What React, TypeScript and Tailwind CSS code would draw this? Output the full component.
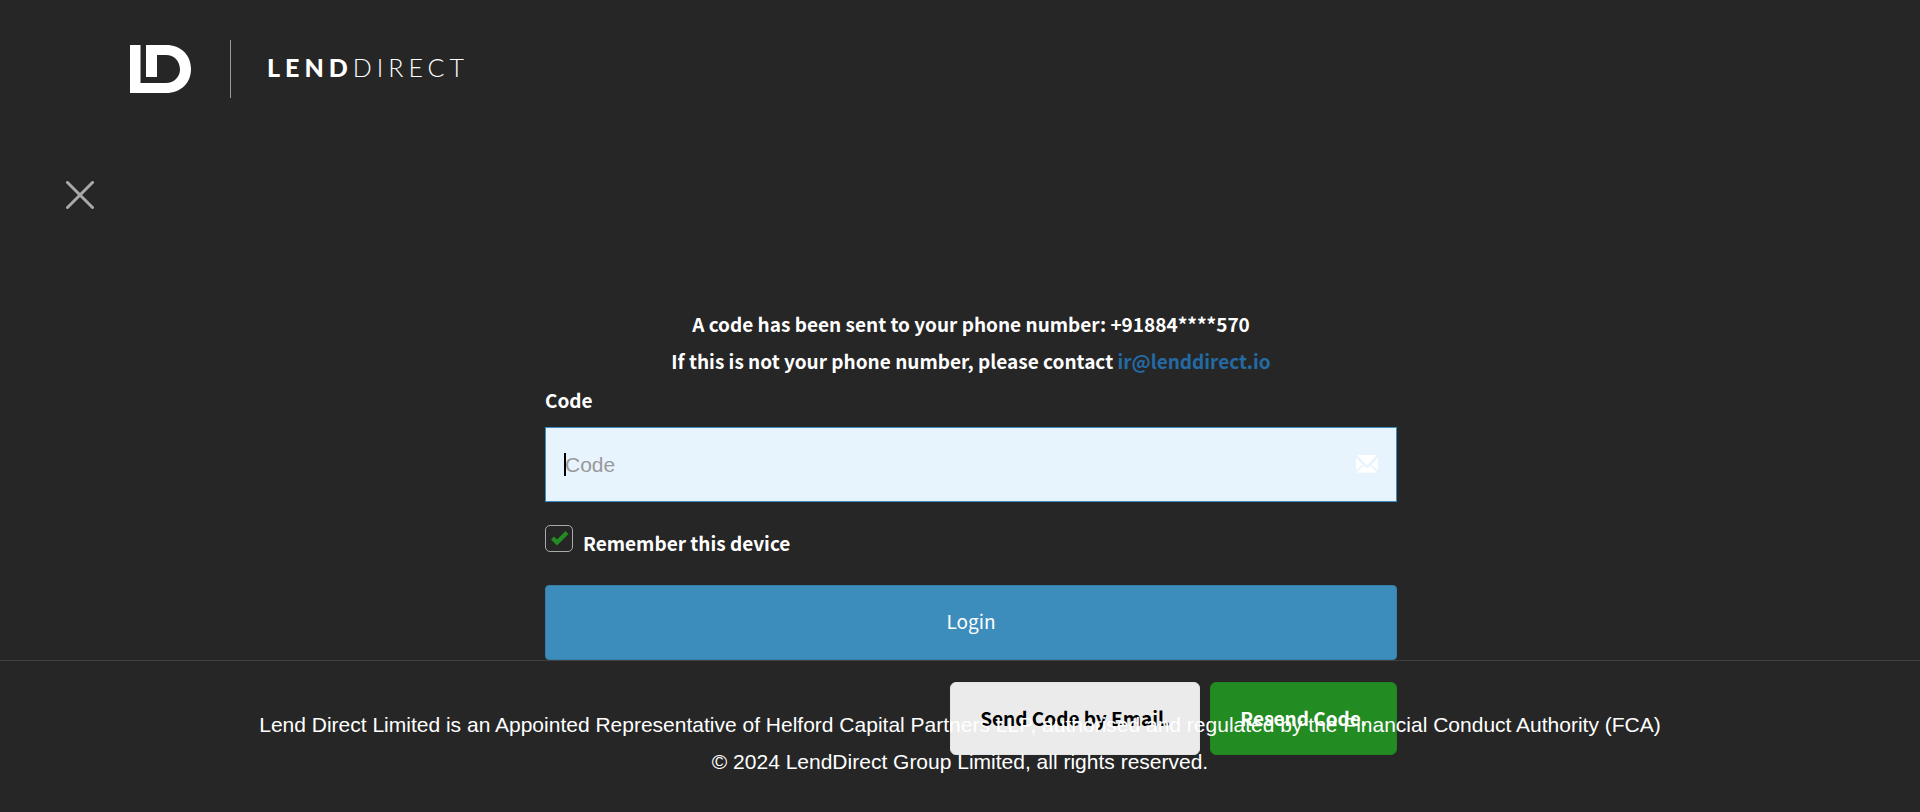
import { useState } from "react";

function LogoMark() {
  return (
    <svg className="h-12 w-[61px] fill-white" viewBox="0 0 61 48" aria-hidden="true">
      <path d="M0 0H10.5V38H36C44 38 50 32 50 24.500C50 16 44 10 36 10H27V32H16V0H36C51 0 61 10 61 24C61 38 51 48 36 48H0Z" />
    </svg>
  );
}

function Header() {
  return (
    <header className="flex items-center pt-10 pl-[130px]">
      <a href="#" aria-label="LendDirect" className="flex items-center text-white">
        <LogoMark />
        <span className="ml-[39px] h-[58px] w-px bg-[#999999]" />
        <span className="ml-9 pb-1 font-['Lato',sans-serif] text-[25px] leading-8 tracking-[0.2em]">
          <span className="font-black">LEND</span>
          <span className="font-light">DIRECT</span>
        </span>
      </a>
    </header>
  );
}

function LoginForm() {
  const [code, setCode] = useState("");
  const [remember, setRemember] = useState(true);

  return (
    <form
      className="mt-24 w-full max-w-[852px] font-['Noto_Sans_CJK_SC',sans-serif] text-[19px] text-white"
      onSubmit={(e) => e.preventDefault()}
    >
      <div className="text-center leading-[37px] font-bold">
        <p>A code has been sent to your phone number: +91884****570</p>
        <p>
          If this is not your phone number, please contact{" "}
          <a href="mailto:ir@lenddirect.io" className="text-[#246aa5]">
            ir@lenddirect.io
          </a>
        </p>
      </div>

      <label htmlFor="code" className="mb-1.5 block leading-[42px] font-bold">
        Code
      </label>
      <div className="relative">
        <input
          id="code"
          type="text"
          placeholder="Code"
          value={code}
          onChange={(e) => setCode(e.target.value)}
          className="block h-[75px] w-full border border-[#3c8dbc] bg-[#e8f4fd] pr-14 pl-[19px] font-['Liberation_Sans',sans-serif] text-[21px] text-black outline-none placeholder:text-[#999999]"
        />
        {code === "" && <span className="absolute top-[26px] left-[19px] h-[23px] w-0.5 bg-black" />}
        <svg className="absolute top-7 right-[19px] h-[18px] w-[22px] fill-white" viewBox="0 0 23 19" aria-hidden="true">
          <path d="M1 0H22L12.500 10Q11.500 11 10.500 10ZM0 3L7 10L0 16ZM23 3V16L16 10ZM8 11L10 13Q11.500 14.500 13 13L15 11L22.500 18.500H.5Z" />
        </svg>
      </div>

      <div className="mt-[23px] flex items-start gap-2.5">
        <span className="relative h-[27px] w-7">
          <input
            id="remember"
            type="checkbox"
            checked={remember}
            onChange={(e) => setRemember(e.target.checked)}
            className="block h-[27px] w-7 appearance-none rounded-[5px] border border-[#aaaaaa] bg-transparent"
          />
          {remember && (
            <svg className="pointer-events-none absolute top-1.5 left-1.5 h-[15px] w-[18px] fill-[#228b22]" viewBox="0 0 18 15" aria-hidden="true">
              <path d="M0 8.500L3 5.500L6 8.500L14.500 0L17.500 3L6 14.500Z" />
            </svg>
          )}
        </span>
        <label htmlFor="remember" className="leading-9 font-bold">
          Remember this device
        </label>
      </div>

      <button type="submit" className="mt-6 block h-[75px] w-full rounded border border-[#367fa9] bg-[#3c8dbc] pb-0.5">
        Login
      </button>

      <div className="mt-[22px] flex justify-end gap-2.5 font-bold">
        <button type="button" className="h-[73px] rounded-md border border-[#e4e4e4] bg-[#ebebeb] px-[29px] text-black">
          Send Code by Email.
        </button>
        <button type="button" className="h-[73px] rounded-md border border-[#208520] bg-[#228b22] px-[29px] text-white">
          Resend Code.
        </button>
      </div>
    </form>
  );
}

function Footer() {
  return (
    <footer className="pointer-events-none absolute inset-x-0 bottom-0 border-t border-[#404040] px-6 pt-[45px] pb-8 text-center font-['Liberation_Sans',sans-serif] text-[21px] leading-[37px] text-white">
      <p>
        Lend Direct Limited is an Appointed Representative of Helford Capital Partners LLP, authorised and regulated by
        the Financial Conduct Authority (FCA)
      </p>
      <p>© 2024 LendDirect Group Limited, all rights reserved.</p>
    </footer>
  );
}

export default function App() {
  return (
    <div className="relative min-h-screen bg-[#262626] pb-14">
      <Header />
      <main>
        <button type="button" aria-label="Close" className="mt-[83px] ml-[66px] block">
          <svg className="h-7 w-7" viewBox="0 0 28 28" fill="none" stroke="#aaaaaa" strokeWidth="3" strokeLinecap="round" aria-hidden="true">
            <path d="M1.500 1.500L26.500 26.500M26.500 1.500L1.500 26.500" />
          </svg>
        </button>
        <div className="flex justify-center pl-[22px]">
          <LoginForm />
        </div>
      </main>
      <Footer />
    </div>
  );
}
